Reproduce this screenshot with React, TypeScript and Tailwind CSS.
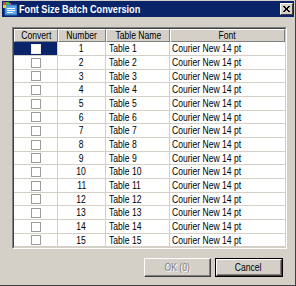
const rows = Array.from({ length: 15 }, (_, i) => i + 1);

function Checkbox({ selected }: { selected?: boolean }) {
  return (
    <div
      className={
        selected
          ? 'w-[10px] h-[10px] bg-white border border-[#f0f0f0]'
          : 'w-[10px] h-[10px] bg-white border border-[#9c9c9c]'
      }
    />
  );
}

// narrow UI text: the dialog font is much narrower than Arial at the same height
function Txt({ children, center }: { children: React.ReactNode; center?: boolean }) {
  return (
    <span
      className={
        center
          ? 'inline-block whitespace-nowrap origin-center scale-x-[0.78]'
          : 'inline-block whitespace-nowrap origin-left scale-x-[0.78]'
      }
    >
      {children}
    </span>
  );
}

function TitleIcon() {
  return (
    <svg width="14" height="14" viewBox="0 0 14 14">
      <rect x="2" y="3" width="12" height="10" fill="#5aa8e8" />
      <rect x="2" y="3" width="12" height="10" fill="none" stroke="#2a6cb8" strokeWidth="1" />
      <rect x="4" y="6" width="8" height="1" fill="#ffffff" />
      <rect x="4" y="8" width="8" height="1" fill="#ffffff" />
      <rect x="4" y="10" width="6" height="1" fill="#ffffff" />
      <rect x="0" y="0" width="3" height="3" fill="#e84040" />
      <rect x="3" y="0" width="3" height="3" fill="#40c040" />
      <rect x="0" y="3" width="3" height="3" fill="#f0d020" />
      <rect x="6" y="1" width="2" height="2" fill="#d040d0" />
    </svg>
  );
}

function Header() {
  const cell = 'h-[13px] shrink-0 flex items-center justify-center bg-[#d4d0c8] border-t border-l border-t-white border-l-white border-r border-b border-r-[#808080] border-b-[#808080] leading-none';
  return (
    <div className="flex">
      <div className={`${cell} w-[44px]`}><Txt center>Convert</Txt></div>
      <div className={`${cell} w-[48px]`}><Txt center>Number</Txt></div>
      <div className={`${cell} w-[64px]`}><Txt center>Table Name</Txt></div>
      <div className={`${cell} w-[115px]`}><Txt center>Font</Txt></div>
    </div>
  );
}

export default function App() {
  return (
    <div
      className="w-[296px] h-[286px] bg-[#d4d0c8] border-r border-b border-[#404040] pl-[2px] pr-[1px] pt-[1px] flex flex-col text-[11px] text-black"
      style={{ fontFamily: '"Liberation Sans", Arial, sans-serif' }}
    >
      <div className="h-[16px] bg-[#0a246a] flex items-center pl-[1px] pr-[1px]">
        <TitleIcon />
        <span className="ml-[2px] text-white font-bold text-[11px] leading-none inline-block whitespace-nowrap origin-left scale-x-[0.83]">
          Font Size Batch Conversion
        </span>
        <div className="ml-auto w-[13px] h-[12px] bg-[#d4d0c8] border-t border-l border-white border-r border-b border-r-[#404040] border-b-[#404040] flex items-center justify-center">
          <svg width="7" height="6" viewBox="0 0 7 6">
            <path d="M0 0 L6 6 M1 0 L7 6 M6 0 L0 6 M7 0 L1 6" stroke="#000" strokeWidth="1" />
          </svg>
        </div>
      </div>

      <div className="ml-[10px] mt-[10px] w-[275px] border border-t-[#808080] border-l-[#808080] border-r-white border-b-white">
        <div className="border border-t-[#404040] border-l-[#404040] border-r-[#d4d0c8] border-b-[#d4d0c8] bg-white">
          <Header />
          {rows.map((n, i) => (
            <div key={n} className={i % 3 === 2 ? 'flex h-[13px]' : 'flex h-[14px]'}>
              <div
                className={
                  i === 0
                    ? 'w-[44px] shrink-0 flex items-center justify-center bg-[#0a246a] border-r border-b border-[#d4d0c8]'
                    : 'w-[44px] shrink-0 flex items-center justify-center border-r border-b border-[#d4d0c8]'
                }
              >
                <Checkbox selected={i === 0} />
              </div>
              <div className="w-[48px] shrink-0 flex items-center justify-center border-r border-b border-[#d4d0c8] leading-none">
                <Txt center>{n}</Txt>
              </div>
              <div className="w-[64px] shrink-0 flex items-center pl-[3px] border-r border-b border-[#d4d0c8] leading-none">
                <Txt>Table {n}</Txt>
              </div>
              <div className="w-[115px] shrink-0 flex items-center pl-[2px] border-b border-[#d4d0c8] leading-none">
                <Txt>Courier New 14 pt</Txt>
              </div>
            </div>
          ))}
        </div>
      </div>

      <div className="mt-[9px] flex justify-end pr-[11px] gap-[4px]">
        <div className="w-[67px] h-[19px] border-t border-l border-white border-r border-b border-r-[#404040] border-b-[#404040]">
          <div className="w-full h-full border-r border-b border-[#808080] flex items-center justify-center text-[#808080] leading-none [text-shadow:1px_1px_0_#ffffff]">
            <Txt center>OK (0)</Txt>
          </div>
        </div>
        <div className="w-[68px] h-[19px] border border-black">
          <div className="w-full h-full border-t border-l border-white border-r border-b border-r-[#404040] border-b-[#404040]">
            <div className="w-full h-full border-r border-b border-[#808080] flex items-center justify-center leading-none">
              <Txt center>Cancel</Txt>
            </div>
          </div>
        </div>
      </div>
    </div>
  );
}
